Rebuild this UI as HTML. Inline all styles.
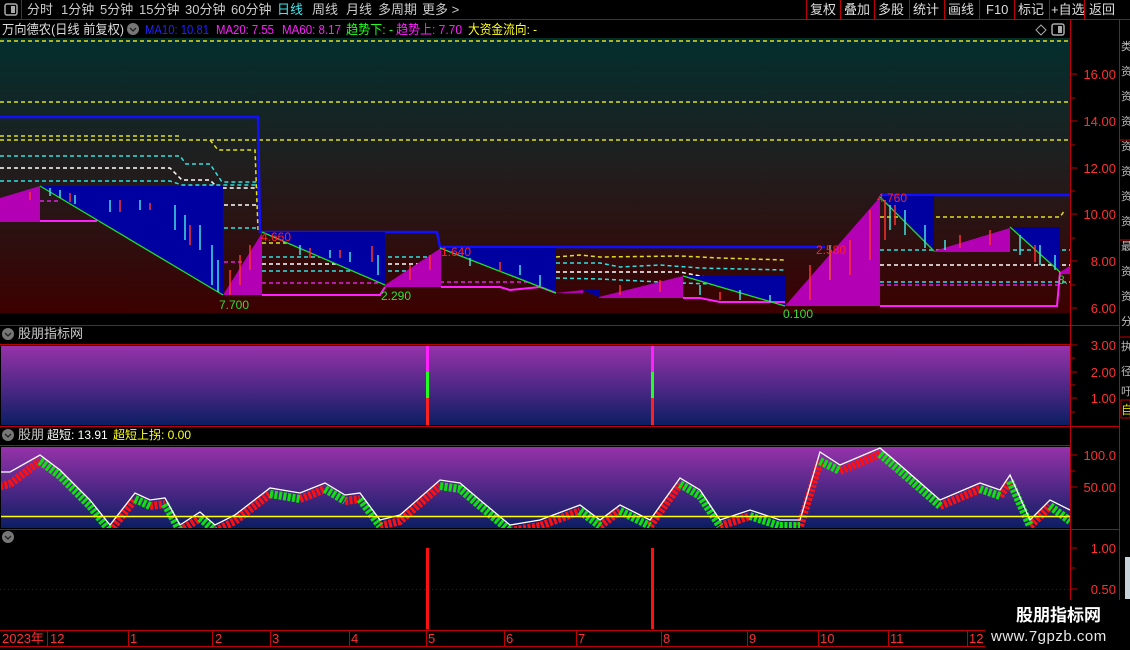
<!DOCTYPE html>
<html><head><meta charset="utf-8"><style>
*{margin:0;padding:0;box-sizing:border-box}
body{width:1130px;height:650px;background:#000;overflow:hidden;position:relative;font-family:"Liberation Sans","Noto Sans CJK SC",sans-serif}
.t{position:absolute;white-space:nowrap;font-size:12px;line-height:14px}
</style></head><body>
<svg width="1130" height="650" style="position:absolute;left:0;top:0" font-family="Liberation Sans, Noto Sans CJK SC, sans-serif">
<defs>
<linearGradient id="mg" x1="0" y1="0" x2="0" y2="1">
<stop offset="0" stop-color="#032e2e"/><stop offset="0.45" stop-color="#1f1f1f"/><stop offset="1" stop-color="#3c0000"/></linearGradient>
<linearGradient id="pg" x1="0" y1="0" x2="0" y2="1">
<stop offset="0" stop-color="#9632aa"/><stop offset="1" stop-color="#0c1e64"/></linearGradient>
</defs>
<line x1="0" y1="19.5" x2="1130" y2="19.5" stroke="#c00000"/>
<line x1="21.5" y1="0" x2="21.5" y2="19" stroke="#c00000"/>
<rect x="5" y="4" width="12" height="11" rx="2" fill="none" stroke="#aaa" stroke-width="1.5"/><rect x="11" y="6" width="4" height="7" fill="#aaa"/>
<g stroke="#c00000"><line x1="806.5" y1="0" x2="806.5" y2="19"/><line x1="840.5" y1="0" x2="840.5" y2="19"/><line x1="874.5" y1="0" x2="874.5" y2="19"/><line x1="909.5" y1="0" x2="909.5" y2="19"/><line x1="944.5" y1="0" x2="944.5" y2="19"/><line x1="979.5" y1="0" x2="979.5" y2="19"/><line x1="1014.5" y1="0" x2="1014.5" y2="19"/><line x1="1049.5" y1="0" x2="1049.5" y2="19"/><line x1="1084.5" y1="0" x2="1084.5" y2="19"/></g>
<rect x="0" y="38" width="1070" height="275" fill="url(#mg)"/>
<g fill="none" stroke-dasharray="4,3" stroke-width="1.5">
<line x1="0" y1="41" x2="1070" y2="41" stroke="#e0e020"/>
<line x1="0" y1="102" x2="1070" y2="102" stroke="#e0e020"/>
<polyline points="0,136 180,136" stroke="#e0e020"/>
<polyline points="0,140 1070,140" stroke="#e0e020"/>
<polyline points="210,140 218,150 255,150 258,230" stroke="#e0e020"/>
<polyline points="0,156 180,156 186,164 210,164 222,182 258,182" stroke="#30e0e0"/>
<polyline points="0,168 170,168 182,180 210,180 218,188 258,188" stroke="#fff"/>
<polyline points="0,181 170,181 182,185 258,185" stroke="#30e0e0"/>
<polyline points="224,205 258,205" stroke="#fff"/>
<polyline points="224,228 258,228" stroke="#30e0e0"/>
<polyline points="40,201 60,201" stroke="#e020e0"/>
<polyline points="224,262 258,262" stroke="#e020e0"/>
<polyline points="262,243 385,243" stroke="#e0e020"/>
<polyline points="262,257 440,257" stroke="#30e0e0"/>
<polyline points="262,264 440,264" stroke="#fff"/>
<polyline points="262,271 440,271" stroke="#30e0e0"/>
<polyline points="262,283 385,283" stroke="#e020e0"/>
<polyline points="556,257 580,255 600,257 680,256 720,258 785,260" stroke="#e0e020"/>
<polyline points="556,263 600,263 620,267 660,265 700,268 785,270" stroke="#30e0e0"/>
<polyline points="556,272 600,272 680,272 720,280 785,280" stroke="#fff"/>
<polyline points="556,278 600,279 680,283 785,286" stroke="#30e0e0"/>
<polyline points="440,282 556,282" stroke="#e020e0"/>
<polyline points="880,217 1060,217 1065,210" stroke="#e0e020"/>
<polyline points="880,250 1070,250" stroke="#30e0e0"/>
<polyline points="880,265 1070,265" stroke="#fff"/>
<polyline points="880,282 1070,282" stroke="#30e0e0"/>
<polyline points="880,285 1060,285" stroke="#e020e0"/>
</g>
<polyline points="0,117 258,117 260,232 437,232 440,247 825,247" fill="none" stroke="#1010ff" stroke-width="2.5"/>
<polyline points="880,195 1070,195" fill="none" stroke="#1010ff" stroke-width="2.5"/>
<g fill="#0000a0">
<polygon points="40,186 223,186 223,295"/>
<polygon points="262,232 385,232 385,285"/>
<polygon points="440,248 556,248 556,293"/>
<polygon points="583,290 599,290 599,297"/>
<polygon points="683,276 785,276 785,306"/>
<polygon points="880,196 934,196 934,251"/>
<polygon points="1010,227 1060,227 1060,272"/>
</g>
<g fill="#b400b4">
<polygon points="0,198 40,186 40,222 0,222"/>
<polygon points="223,295 262,233 262,295"/>
<polygon points="385,285 441,248 441,287 385,287"/>
<polygon points="556,293 583,290 583,293"/>
<polygon points="599,297 683,276 683,298 599,298"/>
<polygon points="785,306 880,197 880,306"/>
<polygon points="934,251 1010,228 1010,252 934,252"/>
<polygon points="1060,272 1070,266 1070,274 1060,274"/>
</g>
<g fill="none" stroke="#ff20ff" stroke-width="2">
<polyline points="40,221 97,221"/>
<polyline points="262,295 380,295 385,287"/>
<polyline points="441,287 500,287 510,290 540,287 556,293"/>
<polyline points="683,298 700,298 720,302 785,302"/>
<polyline points="880,306 1057,306 1060,272"/>
</g>
<g fill="none" stroke="#20e020" stroke-width="1.3">
<polyline points="40,186 223,295"/><polyline points="262,232 385,285"/><polyline points="440,248 556,293"/>
<polyline points="683,276 785,306"/><polyline points="880,197 934,251"/><polyline points="1010,227 1060,272"/>
</g>
<g stroke-width="1.5">
<g stroke="#40e0e0">
<line x1="50" y1="188" x2="50" y2="196"/><line x1="60" y1="190" x2="60" y2="198"/><line x1="75" y1="195" x2="75" y2="204"/><line x1="110" y1="200" x2="110" y2="212"/><line x1="140" y1="200" x2="140" y2="210"/><line x1="175" y1="205" x2="175" y2="230"/><line x1="185" y1="215" x2="185" y2="240"/><line x1="200" y1="225" x2="200" y2="250"/><line x1="212" y1="245" x2="212" y2="285"/><line x1="218" y1="260" x2="218" y2="292"/>
<line x1="300" y1="245" x2="300" y2="255"/><line x1="330" y1="250" x2="330" y2="258"/><line x1="350" y1="252" x2="350" y2="262"/><line x1="378" y1="255" x2="378" y2="275"/>
<line x1="470" y1="258" x2="470" y2="266"/><line x1="520" y1="265" x2="520" y2="275"/><line x1="540" y1="275" x2="540" y2="286"/>
<line x1="700" y1="285" x2="700" y2="295"/><line x1="740" y1="290" x2="740" y2="300"/><line x1="770" y1="295" x2="770" y2="302"/>
<line x1="890" y1="205" x2="890" y2="230"/><line x1="905" y1="210" x2="905" y2="235"/><line x1="925" y1="225" x2="925" y2="248"/><line x1="945" y1="240" x2="945" y2="250"/>
<line x1="1020" y1="235" x2="1020" y2="255"/><line x1="1040" y1="245" x2="1040" y2="265"/><line x1="1055" y1="255" x2="1055" y2="270"/>
<line x1="830" y1="245" x2="830" y2="280"/>
</g>
<g stroke="#ff3030">
<line x1="30" y1="192" x2="30" y2="200"/><line x1="70" y1="193" x2="70" y2="202"/><line x1="120" y1="200" x2="120" y2="212"/><line x1="150" y1="203" x2="150" y2="210"/><line x1="190" y1="225" x2="190" y2="245"/>
<line x1="230" y1="270" x2="230" y2="295"/><line x1="240" y1="255" x2="240" y2="285"/><line x1="250" y1="245" x2="250" y2="270"/>
<line x1="310" y1="248" x2="310" y2="258"/><line x1="340" y1="250" x2="340" y2="258"/><line x1="372" y1="246" x2="372" y2="262"/>
<line x1="410" y1="265" x2="410" y2="280"/><line x1="430" y1="255" x2="430" y2="270"/><line x1="500" y1="262" x2="500" y2="272"/>
<line x1="620" y1="285" x2="620" y2="295"/><line x1="660" y1="280" x2="660" y2="292"/><line x1="720" y1="292" x2="720" y2="300"/>
<line x1="810" y1="265" x2="810" y2="300"/><line x1="830" y1="250" x2="830" y2="280"/><line x1="850" y1="240" x2="850" y2="275"/><line x1="870" y1="210" x2="870" y2="260"/><line x1="885" y1="200" x2="885" y2="240"/><line x1="895" y1="205" x2="895" y2="225"/>
<line x1="960" y1="235" x2="960" y2="248"/><line x1="990" y1="230" x2="990" y2="245"/><line x1="1035" y1="245" x2="1035" y2="262"/>
</g>
</g>
<g font-size="12">
<text x="219" y="309" fill="#30e030">7.700</text>
<text x="381" y="300" fill="#30e030">2.290</text>
<text x="783" y="318" fill="#30e030">0.100</text>
<text x="261" y="241" fill="#ff2020">4.660</text>
<text x="441" y="256" fill="#ff2020">1.640</text>
<text x="816" y="254" fill="#ff2020">2.580</text>
<text x="877" y="202" fill="#ff2020">4.760</text>
<text x="1058" y="284" fill="#30e030">8.</text>
</g>
<g stroke="#c00000">
<line x1="1070.5" y1="20" x2="1070.5" y2="650"/>
<line x1="1119.5" y1="20" x2="1119.5" y2="650"/>
<line x1="0" y1="325.5" x2="1120" y2="325.5"/>
<line x1="0" y1="426.5" x2="1120" y2="426.5"/>
<line x1="0" y1="529.5" x2="1120" y2="529.5"/>
<line x1="0" y1="630.5" x2="985" y2="630.5"/>
<line x1="0" y1="646.5" x2="985" y2="646.5"/>
<line x1="0" y1="344.5" x2="1070" y2="344.5"/>
<line x1="0" y1="445.5" x2="1070" y2="445.5"/>
</g>
<g stroke="#c00000" stroke-width="1">
<line x1="1071" y1="74" x2="1077" y2="74"/><line x1="1071" y1="98" x2="1075" y2="98"/><line x1="1071" y1="121" x2="1077" y2="121"/><line x1="1071" y1="145" x2="1075" y2="145"/><line x1="1071" y1="168" x2="1077" y2="168"/><line x1="1071" y1="191" x2="1075" y2="191"/><line x1="1071" y1="214" x2="1077" y2="214"/><line x1="1071" y1="238" x2="1075" y2="238"/><line x1="1071" y1="261" x2="1077" y2="261"/><line x1="1071" y1="285" x2="1075" y2="285"/><line x1="1071" y1="308" x2="1077" y2="308"/>
<line x1="1071" y1="345" x2="1077" y2="345"/><line x1="1071" y1="358" x2="1075" y2="358"/><line x1="1071" y1="372" x2="1077" y2="372"/><line x1="1071" y1="385" x2="1075" y2="385"/><line x1="1071" y1="398" x2="1077" y2="398"/><line x1="1071" y1="412" x2="1075" y2="412"/>
<line x1="1071" y1="455" x2="1077" y2="455"/><line x1="1071" y1="471" x2="1075" y2="471"/><line x1="1071" y1="487" x2="1077" y2="487"/>
<line x1="1071" y1="548" x2="1077" y2="548"/><line x1="1071" y1="568" x2="1075" y2="568"/><line x1="1071" y1="589" x2="1077" y2="589"/>
</g>
<g font-size="13" fill="#ff3030" text-anchor="end">
<text x="1116" y="79">16.00</text><text x="1116" y="126">14.00</text><text x="1116" y="173">12.00</text><text x="1116" y="219">10.00</text><text x="1116" y="266">8.00</text><text x="1116" y="313">6.00</text>
<text x="1116" y="350">3.00</text><text x="1116" y="377">2.00</text><text x="1116" y="403">1.00</text>
<text x="1116" y="460">100.0</text><text x="1116" y="492">50.00</text>
<text x="1116" y="553">1.00</text><text x="1116" y="594">0.50</text>
</g>
<rect x="1" y="346" width="1069" height="79" fill="url(#pg)"/>
<rect x="426" y="346" width="3" height="26" fill="#ff20ff"/><rect x="426" y="372" width="3" height="26" fill="#20ff20"/><rect x="426" y="398" width="3" height="27" fill="#ff2020"/>
<rect x="651" y="346" width="3" height="26" fill="#ff20ff"/><rect x="651" y="372" width="3" height="26" fill="#20ff20"/><rect x="651" y="398" width="3" height="27" fill="#ff2020"/>
<rect x="1" y="447" width="1069" height="81" fill="url(#pg)"/>
<clipPath id="c3"><rect x="1" y="447" width="1069" height="81"/></clipPath>
<g clip-path="url(#c3)">
<g transform="translate(0,6)" fill="none" stroke-width="8" stroke-dasharray="3,1.5">
<path stroke="#ff1010" d="M0,480L10,478M10,478L40,455M110,525L135,493M150,500L165,498M180,525L200,512M215,525L235,515L270,488M300,493L325,483M345,495L360,493M380,520L400,515L440,480M510,525L540,520L580,505M600,520L620,505M650,520L680,478M720,520L750,510M800,520L820,455M840,465L880,448M940,500L980,483M1000,490L1010,475M1030,520L1050,500"/>
<path stroke="#10e010" d="M40,455L60,470L90,500L110,525M135,493L150,500M165,498L180,525M200,512L215,525M270,488L300,493M325,483L345,495M360,493L380,520M440,480L460,483L480,500L510,525M580,505L600,520M620,505L650,520M680,478L700,490L720,520M750,510L780,520L800,520M820,455L840,465M880,448L900,465L940,500M980,483L1000,490M1010,475L1030,520M1050,500L1070,515"/>
</g>
<polyline fill="none" stroke="#fff" stroke-width="1.3" points="0,472 10,472 40,455 60,470 90,500 110,525 135,493 150,500 165,498 180,525 200,512 215,525 235,515 270,488 300,493 325,483 345,495 360,493 380,520 400,515 440,480 460,483 480,500 510,525 540,520 580,505 600,520 620,505 650,520 680,478 700,490 720,520 750,510 780,520 800,520 820,452 840,465 880,448 900,465 940,500 980,483 1000,490 1010,475 1030,520 1050,500 1070,510"/>
</g>
<line x1="1" y1="516.5" x2="1070" y2="516.5" stroke="#ffff00" stroke-width="1.5"/>
<line x1="0" y1="589.5" x2="1070" y2="589.5" stroke="#800000" stroke-dasharray="1,3"/>
<rect x="426" y="548" width="3" height="81" fill="#ff1010"/><rect x="651" y="548" width="3" height="81" fill="#ff1010"/>
<g stroke="#c00000">
<line x1="47.5" y1="631" x2="47.5" y2="646"/><line x1="128.5" y1="631" x2="128.5" y2="646"/><line x1="212.5" y1="631" x2="212.5" y2="646"/><line x1="270.5" y1="631" x2="270.5" y2="646"/><line x1="349.5" y1="631" x2="349.5" y2="646"/><line x1="426.5" y1="631" x2="426.5" y2="646"/><line x1="504.5" y1="631" x2="504.5" y2="646"/><line x1="576.5" y1="631" x2="576.5" y2="646"/><line x1="661.5" y1="631" x2="661.5" y2="646"/><line x1="747.5" y1="631" x2="747.5" y2="646"/><line x1="818.5" y1="631" x2="818.5" y2="646"/><line x1="888.5" y1="631" x2="888.5" y2="646"/><line x1="967.5" y1="631" x2="967.5" y2="646"/>
</g>
<g font-size="13" fill="#ff3030">
<text x="2" y="643">2023年</text><text x="50" y="643">12</text><text x="130" y="643">1</text><text x="215" y="643">2</text><text x="272" y="643">3</text><text x="351" y="643">4</text><text x="428" y="643">5</text><text x="506" y="643">6</text><text x="578" y="643">7</text><text x="663" y="643">8</text><text x="749" y="643">9</text><text x="820" y="643">10</text><text x="890" y="643">11</text><text x="969" y="643">12</text>
</g>
<rect x="1121" y="20" width="9" height="380" fill="#000"/>
<g font-size="11" fill="#bbb"><text x="1121" y="50">类</text><text x="1121" y="75">资</text><text x="1121" y="100">资</text><text x="1121" y="125">资</text><text x="1121" y="150">资</text><text x="1121" y="175">资</text><text x="1121" y="200">资</text><text x="1121" y="225">资</text><text x="1121" y="250">最</text><text x="1121" y="275">资</text><text x="1121" y="300">资</text><text x="1121" y="325">分</text><text x="1121" y="350">执</text><text x="1121" y="375">径</text><text x="1121" y="395">吁</text></g>
<line x1="1120" y1="140" x2="1130" y2="140" stroke="#c00000"/><line x1="1120" y1="240" x2="1130" y2="240" stroke="#c00000"/><line x1="1120" y1="337" x2="1130" y2="337" stroke="#c00000"/>
<rect x="1121" y="400" width="9" height="18" fill="#000" stroke="#c00000"/><text x="1121" y="414" font-size="12" fill="#e0e000">自</text>
<rect x="1125" y="557" width="5" height="42" fill="#c8d4dc"/>
<path d="M1041,25 L1046,30 L1041,35 L1036,30 Z" fill="none" stroke="#aaa"/>
<rect x="1052" y="24" width="12" height="11" rx="2" fill="none" stroke="#aaa" stroke-width="1.5"/><rect x="1058" y="26" width="4" height="7" fill="#aaa"/>
<circle cx="133" cy="29" r="6" fill="#777"/><path d="M130,28 L133,31 L136,28" stroke="#222" fill="none" stroke-width="1.3"/>
<circle cx="8" cy="334" r="6" fill="#777"/><path d="M5,333 L8,336 L11,333" stroke="#222" fill="none" stroke-width="1.3"/>
<circle cx="8" cy="435" r="6" fill="#777"/><path d="M5,434 L8,437 L11,434" stroke="#222" fill="none" stroke-width="1.3"/>
<circle cx="8" cy="537" r="6" fill="#777"/><path d="M5,536 L8,539 L11,536" stroke="#222" fill="none" stroke-width="1.3"/>
<g font-size="13">
<text x="2" y="34" fill="#ddd" textLength="122" lengthAdjust="spacingAndGlyphs">万向德农(日线 前复权)</text>
<text x="145" y="34" fill="#2020ff" textLength="64" lengthAdjust="spacingAndGlyphs">MA10: 10.81</text>
<text x="216" y="34" fill="#ff20ff" textLength="58" lengthAdjust="spacingAndGlyphs">MA20: 7.55</text>
<text x="282" y="34" fill="#ff20ff" textLength="59" lengthAdjust="spacingAndGlyphs">MA60: 8.17</text>
<text x="346" y="34" fill="#20ff20" textLength="47" lengthAdjust="spacingAndGlyphs">趋势下: -</text>
<text x="396" y="34" fill="#ff20ff" textLength="66" lengthAdjust="spacingAndGlyphs">趋势上: 7.70</text>
<text x="468" y="34" fill="#ffff20" textLength="69" lengthAdjust="spacingAndGlyphs">大资金流向: -</text>
</g>
<rect x="985" y="600" width="145" height="50" fill="#000"/>
<text x="1016" y="621" font-size="17" font-weight="bold" fill="#fff">股朋指标网</text>
<text x="991" y="641" font-size="15" fill="#e8e8e8" letter-spacing="0.5">www.7gpzb.com</text>
</svg>
<div class="t" style="left:27px;top:3px;font-size:13px;color:#ccc">分时</div>
<div class="t" style="left:61px;top:3px;font-size:13px;color:#ccc">1分钟</div>
<div class="t" style="left:100px;top:3px;font-size:13px;color:#ccc">5分钟</div>
<div class="t" style="left:139px;top:3px;font-size:13px;color:#ccc">15分钟</div>
<div class="t" style="left:185px;top:3px;font-size:13px;color:#ccc">30分钟</div>
<div class="t" style="left:231px;top:3px;font-size:13px;color:#ccc">60分钟</div>
<div class="t" style="left:277px;top:3px;font-size:13px;color:#40e8f0">日线</div>
<div class="t" style="left:312px;top:3px;font-size:13px;color:#ccc">周线</div>
<div class="t" style="left:346px;top:3px;font-size:13px;color:#ccc">月线</div>
<div class="t" style="left:378px;top:3px;font-size:13px;color:#ccc">多周期</div>
<div class="t" style="left:422px;top:3px;font-size:13px;color:#ccc">更多 &gt;</div>
<div class="t" style="left:810px;top:3px;font-size:13px;color:#ddd">复权</div>
<div class="t" style="left:844px;top:3px;font-size:13px;color:#ddd">叠加</div>
<div class="t" style="left:878px;top:3px;font-size:13px;color:#ddd">多股</div>
<div class="t" style="left:913px;top:3px;font-size:13px;color:#ddd">统计</div>
<div class="t" style="left:948px;top:3px;font-size:13px;color:#ddd">画线</div>
<div class="t" style="left:986px;top:3px;font-size:13px;color:#ddd">F10</div>
<div class="t" style="left:1018px;top:3px;font-size:13px;color:#ddd">标记</div>
<div class="t" style="left:1051px;top:3px;font-size:13px;color:#ddd">+自选</div>
<div class="t" style="left:1089px;top:3px;font-size:13px;color:#ddd">返回</div>
<div class="t" style="left:18px;top:327px;font-size:13px;color:#ccc">股朋指标网</div>
<div class="t" style="left:18px;top:428px;font-size:13px;color:#ccc">股朋</div>
<div class="t" style="left:47px;top:428px;color:#fff">超短: 13.91</div>
<div class="t" style="left:113px;top:428px;color:#ffff20">超短上拐: 0.00</div>
</body></html>
